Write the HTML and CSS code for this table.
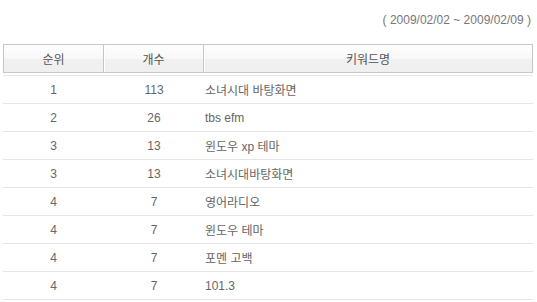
FILE: index.html
```html
<!DOCTYPE html>
<html lang="ko">
<head>
<meta charset="utf-8">
<link rel="stylesheet" href="styles.css">
</head>
<body>
<div class="page">
  <div class="period">( 2009/02/02 ~ 2009/02/09 )</div>
  <table class="rank">
    <thead>
      <tr>
        <th class="c1">순위</th>
        <th class="c2">개수</th>
        <th class="c3">키워드명</th>
      </tr>
    </thead>
    <tbody>
      <tr class="spacer"><td colspan="3"></td></tr>
      <tr><td class="c1">1</td><td class="c2">113</td><td class="c3">소녀시대 바탕화면</td></tr>
      <tr><td class="c1">2</td><td class="c2">26</td><td class="c3">tbs efm</td></tr>
      <tr><td class="c1">3</td><td class="c2">13</td><td class="c3">윈도우 xp 테마</td></tr>
      <tr><td class="c1">3</td><td class="c2">13</td><td class="c3">소녀시대바탕화면</td></tr>
      <tr><td class="c1">4</td><td class="c2">7</td><td class="c3">영어라디오</td></tr>
      <tr><td class="c1">4</td><td class="c2">7</td><td class="c3">윈도우 테마</td></tr>
      <tr><td class="c1">4</td><td class="c2">7</td><td class="c3">포멘 고백</td></tr>
      <tr><td class="c1">4</td><td class="c2">7</td><td class="c3">101.3</td></tr>
    </tbody>
  </table>
</div>
</body>
</html>
```

FILE: styles.css
```css
html, body {
  margin: 0;
  padding: 0;
  background: #fff;
}
body {
  font-family: "Liberation Sans", "Noto Sans CJK KR", sans-serif;
  font-size: 12px;
  color: #666;
}
.page {
  padding: 0 4px 0 3px;
}
.period {
  height: 44px;
  line-height: 40px;
  text-align: right;
  padding-right: 2px;
  color: #777;
  box-sizing: border-box;
}
.rank {
  width: 530px;
  border-collapse: separate;
  border-spacing: 0;
  table-layout: fixed;
}
.rank th {
  height: 27px;
  padding: 0;
  font-weight: normal;
  color: #555;
  text-align: center;
  border-top: 1px solid #c6c6c6;
  border-bottom: 1px solid #c6c6c6;
  background: linear-gradient(#fefefe 0%, #f8f8f8 50%, #f1f1f1 52%, #efefef 100%);
}
.rank th.c1 {
  width: 99px;
  border-left: 1px solid #c6c6c6;
  border-right: 1px solid #c6c6c6;
}
.rank th.c2 {
  width: 99px;
  border-right: 1px solid #c6c6c6;
  box-shadow: inset 1px 0 0 #fff;
}
.rank th.c3 {
  border-right: 1px solid #c6c6c6;
  box-shadow: inset 1px 0 0 #fff;
}
.rank .spacer td {
  height: 2px;
  padding: 0;
  border-bottom: 1px solid #e6e6e6;
}
.rank td {
  height: 27px;
  padding: 0;
  border-bottom: 1px solid #e6e6e6;
  color: #666;
}
.rank td.c1, .rank td.c2 {
  text-align: center;
}
.rank td.c3 {
  text-align: left;
  padding-left: 1px;
}
```
